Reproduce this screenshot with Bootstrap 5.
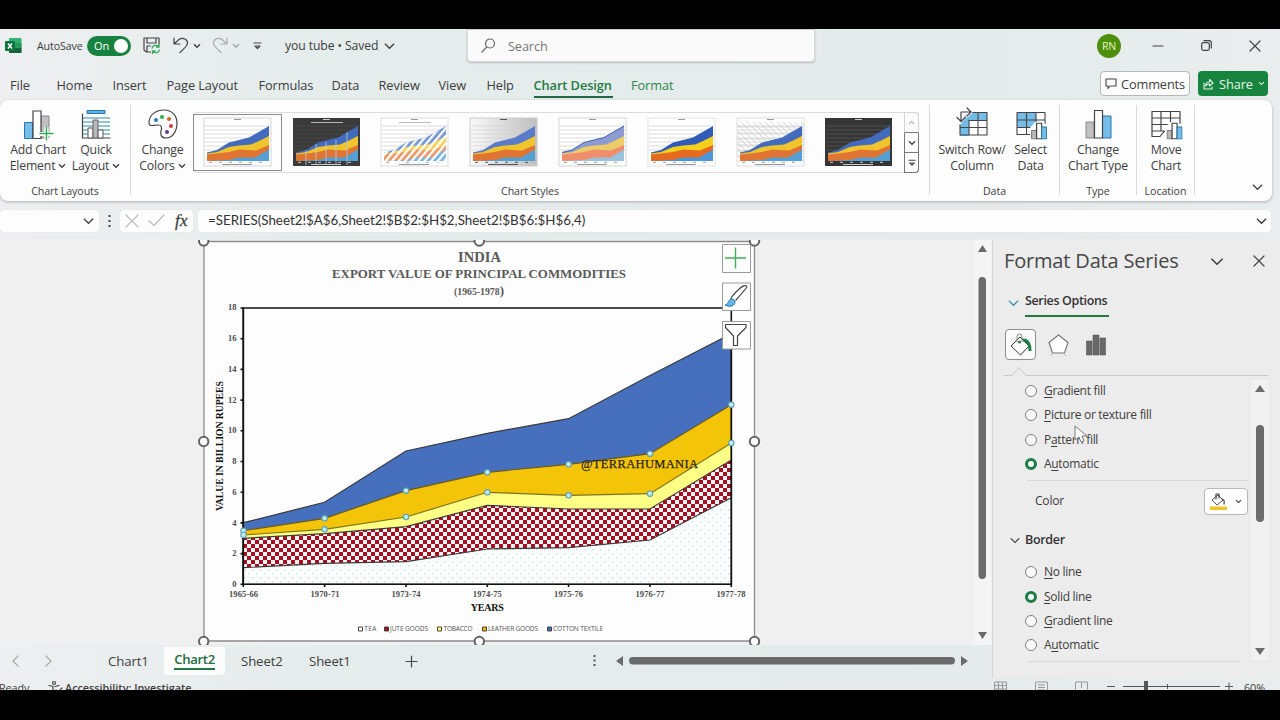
<!DOCTYPE html>
<html lang="en">
<head>
<meta charset="utf-8">
<meta name="viewport" content="width=device-width, initial-scale=1">
<title>you tube - Excel</title>
<link href="https://cdn.jsdelivr.net/npm/bootstrap@5.3.0/dist/css/bootstrap.min.css" rel="stylesheet">
<style>
  body { width:1280px; height:720px; overflow:hidden; background:#000; font-family:"Open Sans","Noto Sans",sans-serif; font-size:12.5px; line-height:16px; color:#3d3d3d; letter-spacing:-.1px; }
  svg { display:block; flex:none; overflow:visible; }
  .ln { fill:none; stroke:#444; stroke-width:1.2; stroke-linecap:round; stroke-linejoin:round; }
  .app { margin-top:29px; height:661px; overflow:hidden; background:linear-gradient(90deg,#edeff0 0,#e5ecec 25%,#e4ebea 75%,#e9eded 100%); display:grid; grid-template-rows:39px 32px 101px 39px 405px 57px; }
  .titlebar { padding-left:5px; height:33px; }
  .autosave { font-size:10.6px; margin-left:15px; width:50px; }
  .docname { font-size:12.2px; margin-left:23px; width:99px; white-space:nowrap; }
  .toggle { width:44px; height:20px; border-radius:10px; background:#17823f; color:#fff; font-size:11px; padding:0 3px 0 7px; }
  .knob { width:14px; height:14px; border-radius:50%; background:#fff; }
  .searchbox { width:348px; height:33px; background:#fafafa; border:1px solid #d6dada; border-top-color:#ccc; border-radius:0 0 4px 4px; box-shadow:0 1px 2px #0003; color:#777; font-size:12.7px; padding-left:13px; gap:12px; margin-left:72px; align-self:flex-start; }
  .avatar { width:24px; height:24px; border-radius:50%; background:#4e900b; color:#e3f3c0; font-size:10.5px; margin-left:282px; }
  .tabs { font-size:12.8px; padding-left:10px; }
  .tabs > span { height:23px; line-height:20px; white-space:nowrap; flex:none; margin-top:7px; }
  .tabs > span:nth-child(1){width:46.5px} .tabs > span:nth-child(2){width:56px} .tabs > span:nth-child(3){width:54px} .tabs > span:nth-child(4){width:92px} .tabs > span:nth-child(5){width:73px} .tabs > span:nth-child(6){width:47px} .tabs > span:nth-child(7){width:60px} .tabs > span:nth-child(8){width:48px} .tabs > span:nth-child(9){width:47px}
  .tabs .on { color:#1f7a43; font-weight:600; width:79px; border-bottom:2px solid #20683f; letter-spacing:-.08px; }
  .tabs .fmt { color:#2d8650; margin-left:18.5px; width:469px; }
  .pill { height:25px; border-radius:4px; font-size:12.8px; margin-top:3px; white-space:nowrap; }
  .comments { width:90px; border:1px solid #b5b8b8; background:#fdfdfd; gap:4px; padding-left:4px; letter-spacing:-.15px; }
  .share { width:70px; background:#17853f; color:#e4f5e8; margin-left:8px; gap:5px; padding-left:4px; }
  .ribbon { background:#fdfdfd; border-radius:8px; width:1272px; box-shadow:0 1px 3px #0004; }
  .rgroup { border-right:1px solid #dadada; height:90px; margin-top:5px; }
  .rgroup > .cap { font-size:10.6px; line-height:14px; height:11px; text-align:center; letter-spacing:-.05px; }
  .rbtn { width:58px; text-align:center; line-height:16px; font-size:12.3px; letter-spacing:-.2px; white-space:nowrap; }
  .rbtn svg { height:32px; margin:3px auto 2px; }
  .rbtn span svg { display:inline-block; height:auto; margin:0 0 2px 3px; }
  .g-layout { width:131px; } .g-style { width:799px; } .g-data { width:130px; } .g-type { width:77px; } .g-loc { width:58px; }
  .gallery { width:726px; height:61px; border:1px solid #dcdcdc; border-radius:4px; margin:7px 0 0 2px; }
  .thumb { width:88.8px; height:57px; }
  .thumb.sel { border:1px solid #8d8d8d; margin-top:1px; background:#fdfdfd; margin-left:-1px; padding-bottom:1px; }
  .gscroll { width:15px; margin-left:auto; margin-right:-1px; margin-top:-1px; height:61px; }
  .gscroll > div { height:20px; border:1px solid #777; border-top-width:0; }
  .gscroll > div:first-child { border-color:#d4d4d4 #d4d4d4 #777; height:21px; border-top-width:1px; border-top-right-radius:4px; }
  .gscroll > div:last-child { border-bottom-right-radius:4px; }
  .fbar { padding-top:8.5px; }
  .fbox { background:#fdfdfd; height:22px; border-radius:4px; box-shadow:0 0 1px #0002; }
  .fx { font:italic 17px "Liberation Serif",serif; margin-left:11px; letter-spacing:.3px; -webkit-text-stroke:.3px; }
  .ftext { font-family:Lato,"Open Sans",sans-serif; font-size:13.35px; line-height:21px; color:#333; padding-left:10px; width:1073px; letter-spacing:0; }
  .work { background:#f0f0f0; }
  .sheetarea { width:992px; overflow:hidden; }
  .chart text { font-family:"Liberation Serif",serif; letter-spacing:0; }
  .chart .legend text { font-family:"Open Sans",sans-serif; font-size:6.5px; }
  .pane { width:288px; background:#ececec; border-left:1px solid #d3d6d6; height:438px; position:relative; z-index:2; }
  .pane h2 { font-size:20px; line-height:26px; font-weight:400; color:#474747; margin:0; letter-spacing:-.17px; width:201px; white-space:nowrap; }
  .so { font-weight:600; border-bottom:2.5px solid #217a40; height:24px; width:84px; letter-spacing:-.35px; white-space:nowrap; color:#333; }
  .seltab { width:31px; height:31px; border:1px solid #8f8f8f; border-radius:4px; background:#fafafa; }
  .opt { height:24.3px; gap:7px; letter-spacing:-.3px; font-size:12px; }
  .opt i { width:12px; height:12px; border:1.4px solid #808080; border-radius:50%; background:#fafafa; }
  .opt i.on { border:3.6px solid #1b7c45; }
  .opt u { text-underline-offset:2px; }
  .colorrow { border-top:1px solid #d9d9d9; margin:4px 0 0 34px; width:221px; height:41px; font-size:12.1px; letter-spacing:-.25px; }
  .colorbtn { width:44px; height:27px; border:1px solid #b9b9b9; border-radius:4px; background:#fdfdfd; flex:none; }
  .sheets { font-size:13.2px; height:32px; padding-left:12px; }
  .activetab { color:#1f6b41; font-weight:600; width:61px; height:28px; background:#fcfcfc; border-radius:0 0 4px 4px; letter-spacing:-.35px; }
  .activetab b { border-bottom:2px solid #1f7a43; font-weight:600; line-height:18px; margin-top:-3px; }
  .status { font-size:10.8px; line-height:14px; padding-top:3.5px; white-space:nowrap; }
  .cursor { position:absolute; left:81px; top:185px; }
</style>
</head>
<body>
<svg width="0" height="0" class="position-absolute">
  <defs>
    <pattern id="check" width="8" height="8" patternUnits="userSpaceOnUse" x="243" y="584"><path fill="#fdf3f3" d="M0 0h8v8H0z"/><path fill="#a50f22" d="M0 0h4v4H0zM4 4h4v4H4z"/></pattern>
    <pattern id="dots" width="8" height="8" patternUnits="userSpaceOnUse" x="243" y="584"><path fill="#fcfdfd" d="M0 0h8v8H0z"/><path fill="#b5dde3" d="M1 1h1.3v1.3H1zM5 5h1.3v1.3H5z"/></pattern>
    <pattern id="hatch" width="5" height="5" patternUnits="userSpaceOnUse" patternTransform="rotate(40)"><path fill="#fdfdfd" d="M0 0h2.300v5H0z"/></pattern>
    <pattern id="grid" width="6" height="6" patternUnits="userSpaceOnUse"><path d="M0 0l6 6M0 3h6" stroke="#c9c9c9" stroke-width=".7"/></pattern>
    <linearGradient id="gray"><stop stop-color="#fafafa"/><stop offset="1" stop-color="#bdbdbd"/></linearGradient>
    <symbol id="area" viewBox="0 0 67 48">
      <path d="M1 8h65M1 12h65M1 16h65M1 20h65M1 24h65M1 28h65M1 32h65" stroke="var(--g,#ccc)" stroke-width=".7"/>
      <path fill="var(--a,#426bbd)" d="M3 34.500L13 32 25 24.500 35 22 45 19.500 65 8V43H3z"/>
      <path fill="var(--b,#efc42c)" d="M3 35.500L13 34 25 29 35 27.500 47 26.500 55 23 65 18V43H3z"/>
      <path fill="var(--c,#e07432)" d="M3 36.500L13 35.500 25 34 35 31.500 52 32.500 65 27V43H3z"/>
      <path fill="var(--d,#549fd3)" d="M3 43L25 42 35 39.500 51 39.500 65 31.500V43H3z"/>
      <path d="M30 1.500h7M18 46.500h30M5 44.300h3m7 0h3m7 0h3m7 0h3m7 0h3m7 0h3" stroke="var(--t,#999)" stroke-width="1"/>
    </symbol>
    <symbol id="chev" viewBox="0 0 8 6"><path d="M1 1.300l3 3 3-3" fill="none" stroke="currentColor" stroke-width="1.300"/></symbol>
    <symbol id="bigchev" viewBox="0 0 12 8"><path d="M1 1.500l5 5 5-5" fill="none" stroke="currentColor" stroke-width="1.300"/></symbol>
    <symbol id="bars" viewBox="0 0 16 17"><path d="M.6 8h5v8.400h-5z" fill="#b8b8b8" stroke="#777"/><path d="M5.600.6h5v15.800h-5z" fill="#fff" stroke="#444" stroke-width="1.200"/><path d="M10.600 4.500h5v12h-5z" fill="#75bce8" stroke="#2778a9"/></symbol>
  </defs>
</svg>

<div class="app">
  <header class="titlebar d-flex align-items-center">
    <svg width="17" height="17" viewBox="0 0 17 17"><rect x="4" y="1" width="12.500" height="15" rx="1" fill="#33b073"/><path fill="#1f8a50" d="M4 6h6v5H4z"/><path fill="#17603c" d="M4 11h12.500v4a1 1 0 0 1-1 1H4z"/><path fill="#2a9a5d" d="M10 6h6.500v5H10z"/><rect y="4" width="10" height="10" rx="1" fill="#0f7540"/><path d="M3 6.500l4 5M7 6.500l-4 5" stroke="#fff" stroke-width="1.400"/></svg>
    <span class="autosave">AutoSave</span>
    <div class="toggle d-flex align-items-center justify-content-between">On<i class="knob"></i></div>
    <svg style="margin-left:12px" width="17" height="17" viewBox="0 0 17 17"><path class="ln" d="M8 15H3.500L1 13V1h15v6M4 1v5h9V1M4 15V9h4"/><path d="M8 8h9v9H8z" fill="#e8eded"/><path d="M9 11.500a3.800 3.800 0 0 1 6.500-2M16 7v3h-3M16.500 12.500a3.800 3.800 0 0 1-6.500 2M9.500 17v-3h3" fill="none" stroke="#35a857" stroke-width="1.300"/></svg>
    <svg style="margin-left:13px" width="16" height="17" viewBox="0 0 16 17"><path class="ln" d="M1 1v6h6M1.500 6.500L6 2.500C10-.5 15 3 14.500 6.500 14 9 12 11 7 15.500"/></svg>
    <svg style="margin-left:4px" width="8" height="6"><use href="#chev"/></svg>
    <svg style="margin-left:11px" width="16" height="17" viewBox="0 0 16 17"><path class="ln" style="stroke:#aaa" d="M15 1v6H9M14.500 6.500L10 2.500C6-.5 1 3 1.500 6.500 2 9 4 11 9 15.500"/></svg>
    <svg class="text-black-50" style="margin-left:4px;opacity:.6" width="8" height="6"><use href="#chev"/></svg>
    <svg style="margin-left:13px" width="9" height="8" viewBox="0 0 9 8"><path class="ln" d="M1 1h7M2 4l2.500 2.500L7 4z"/></svg>
    <span class="docname">you tube &bull; Saved</span>
    <svg width="11" height="8"><use href="#bigchev"/></svg>
    <div class="searchbox d-flex align-items-center">
      <svg width="15" height="15" viewBox="0 0 15 15"><circle class="ln" style="stroke:#666" cx="9" cy="5.500" r="4.500"/><path class="ln" style="stroke:#666" d="M5.800 8.800L1 14"/></svg>Search
    </div>
    <div class="avatar d-flex align-items-center justify-content-center">RN</div>
    <svg style="margin-left:32px" width="10" height="10"><path class="ln" d="M0 5h10"/></svg>
    <svg style="margin-left:38px" width="11" height="11" viewBox="0 0 11 11"><rect class="ln" x=".7" y="2.700" width="7.600" height="7.600" rx="1.500"/><path class="ln" d="M3 .7h5a2.300 2.300 0 0 1 2.300 2.300v5"/></svg>
    <svg style="margin-left:38px" width="10" height="10"><path class="ln" d="M0 0l10 10M10 0L0 10"/></svg>
  </header>

  <nav class="tabs d-flex">
    <span>File</span><span>Home</span><span>Insert</span><span>Page Layout</span><span>Formulas</span><span>Data</span><span>Review</span><span>View</span><span>Help</span><span class="on">Chart Design</span><span class="fmt">Format</span>
    <div class="pill comments d-flex align-items-center"><svg width="12" height="12" viewBox="0 0 12 12"><path class="ln" style="stroke-width:1.100" d="M1 1h10v7H5L3 10.500V8H1z"/></svg>Comments</div>
    <div class="pill share d-flex align-items-center"><svg width="12" height="12" viewBox="0 0 12 12"><path class="ln" style="stroke:#dff5e4;stroke-width:1.100" d="M2 5v6h8V9M3.500 8c0-3 2-4 4-4V1.500L11 5 7.500 8V6C6 6 4.500 6.500 3.500 8z"/></svg>Share<svg width="7" height="5"><use href="#chev"/></svg></div>
  </nav>

  <section class="ribbon d-flex">
    <div class="rgroup g-layout d-flex flex-column justify-content-between">
      <div class="d-flex" style="padding-left:9px">
        <div class="rbtn"><svg width="32" height="32" viewBox="0 0 32 32"><path d="M2.500 14.500h8v16h-8z" fill="#77bde9" stroke="#2778a9"/><path d="M19 8h8v22h-8z" fill="#c0c0c0" stroke="#888"/><path d="M11 3h8v27.500h-8z" fill="#fff" stroke="#444" stroke-width="1.200"/><path d="M24.500 19v14M17.500 26h14" stroke="#fff" stroke-width="4"/><path d="M24.500 18.500v14M17.500 25.500h14" stroke="#35a857" stroke-width="1.400"/></svg>Add Chart<br><span>Element<svg width="8" height="6"><use href="#chev"/></svg></span></div>
        <div class="rbtn"><svg width="30" height="32" viewBox="0 0 30 32"><path d="M6 2.500h18v3H6z" fill="#62b0e3" stroke="#2778a9"/><path d="M2 10h27M2 14h27M2 18h27M2 22h27M2 26h27" stroke="#2f8f9d"/><path class="ln" d="M1.500 6v24H29"/><path d="M7 20h5v10H7z" fill="#fff" stroke="#555"/><path d="M12 12h5v18h-5z" fill="#b9b9b9" stroke="#666"/><path d="M17 22h5v8h-5z" fill="#fff" stroke="#555"/></svg>Quick<br><span>Layout<svg width="8" height="6"><use href="#chev"/></svg></span></div>
      </div>
      <div class="cap">Chart Layouts</div>
    </div>
    <div class="rgroup g-style d-flex flex-column justify-content-between">
      <div class="d-flex" style="padding-left:2px">
        <div class="rbtn" style="padding-left:1px"><svg width="30" height="32" viewBox="0 0 30 32"><path class="ln" d="M1 15C1 6 9 2 16 2c8 0 13 6 13 13 0 9-5 15-11 15-5 0-6-4-5-7 1-3 1-6-3-6-5 0-9 2-9-2z" style="fill:#fff"/><circle cx="8" cy="12" r="2" fill="#287db8"/><circle cx="14" cy="9" r="2" fill="#35a857"/><circle cx="21" cy="11" r="2" fill="#c76b1e"/><circle cx="23" cy="18" r="2" fill="#c93c43"/><circle cx="19" cy="24" r="2" fill="#6c3698"/></svg>Change<br><span>Colors<svg width="8" height="6"><use href="#chev"/></svg></span></div>
        <div class="gallery d-flex">
          <div class="thumb sel d-flex align-items-center justify-content-center"><svg width="67" height="48"><rect width="67" height="48" fill="#fff" stroke="#d5d5d5"/><use href="#area"/></svg></div>
          <div class="thumb d-flex align-items-center justify-content-center"><svg width="67" height="48" style="--g:#4d4d4d;--t:#ccc"><rect width="67" height="48" fill="#3a3a3a"/><use href="#area"/><path d="M13 32v15M23 26v21M33 24v23M43 22v25M54 14v33" stroke="#b8cbe0" stroke-width=".8"/><path d="M18 4.500h32" stroke="#bbb"/></svg></div>
          <div class="thumb d-flex align-items-center justify-content-center"><svg width="67" height="48" style="--a:#6f94d6;--b:#f3d25a;--c:#ea9463;--d:#6fb2dd"><rect width="67" height="48" fill="#fff" stroke="#ddd"/><use href="#area"/><path d="M3 34.500L13 32 25 24.500 35 22 45 19.500 65 8V46H3z" fill="url(#hatch)"/><path d="M18 4.500h32" stroke="#bbb"/></svg></div>
          <div class="thumb d-flex align-items-center justify-content-center"><svg width="67" height="48" style="--g:#d0d0d0;--a:#5a7cc8;--t:#555"><rect width="67" height="48" fill="url(#gray)" stroke="#ccc"/><use href="#area"/></svg></div>
          <div class="thumb d-flex align-items-center justify-content-center"><svg width="67" height="48" style="--a:#8c9bd2;--b:#edcb67;--c:#ef8e6c;--d:#9bc2dd"><rect width="67" height="48" fill="#fff" stroke="#d5d5d5"/><use href="#area"/><path d="M3 34.500L13 32 25 24.500 35 22 45 19.500 65 8" fill="none" stroke="#3f5fae"/></svg></div>
          <div class="thumb d-flex align-items-center justify-content-center"><svg width="67" height="48" style="--a:#2e5cb8;--b:#f4cf1b;--c:#e56a20;--d:#4b96d8"><rect width="67" height="48" fill="#fff" stroke="#e2e2e2"/><use href="#area"/></svg></div>
          <div class="thumb d-flex align-items-center justify-content-center"><svg width="67" height="48"><rect width="67" height="48" fill="#fff" stroke="#ddd"/><rect y="4" width="67" height="40" fill="url(#grid)"/><use href="#area"/></svg></div>
          <div class="thumb d-flex align-items-center justify-content-center"><svg width="67" height="48" style="--g:#5c5c5c;--t:#ccc"><rect width="67" height="48" fill="#353535"/><use href="#area"/></svg></div>
          <div class="gscroll">
            <div class="d-flex align-items-center justify-content-center"><svg width="7" height="5" style="transform:scaleY(-1);color:#aaa"><use href="#chev"/></svg></div>
            <div class="d-flex align-items-center justify-content-center"><svg width="8" height="6"><use href="#chev"/></svg></div>
            <div class="d-flex align-items-center justify-content-center"><svg width="8" height="8" viewBox="0 0 9 8"><path class="ln" d="M1 1h7M2 4l2.500 2.500L7 4z"/></svg></div>
          </div>
        </div>
      </div>
      <div class="cap">Chart Styles</div>
    </div>
    <div class="rgroup g-data d-flex flex-column justify-content-between">
      <div class="d-flex" style="padding-left:8px">
        <div class="rbtn" style="width:68px"><svg width="32" height="32" viewBox="0 0 32 32"><path d="M4 10L10 4.500h21V28H4z" fill="#fff"/><path d="M12 4.500h19v8H4l3-3zM4 12h9v16H4z" fill="#74bbe8"/><path class="ln" style="stroke-width:1.100" d="M13 4.500h18V27H4V14M4 19.500h27M13 12.500h18M13 12v15M22 4.500V27"/><path class="ln" d="M4 15V6.500Q4 4 7 4h8M11 0l4 4-4 4M0 10l4 4 4-4" style="stroke:#fff;stroke-width:3"/><path class="ln" d="M5 13V4h10M11 0l4 4-4 4M1 9.500l4 4 4-4"/></svg>Switch Row/<br>Column</div>
        <div class="rbtn" style="width:49px"><svg width="32" height="32" viewBox="0 0 32 32"><path d="M2 4.500h28v22H2z" fill="#fff"/><path d="M2 4.500h19v15H2z" fill="#74bbe8"/><path class="ln" style="stroke-width:1.100" d="M2 4.500h28v22H2zM2 12h28M2 19.500h28M11.500 4.500v22M21 4.500v22"/><path fill="#fdfdfd" d="M15 20l5-6h6l7 3v16H15z"/><use href="#bars" x="16" y="14.500" width="16" height="17"/></svg>Select<br>Data</div>
      </div>
      <div class="cap">Data</div>
    </div>
    <div class="rgroup g-type d-flex flex-column justify-content-between">
      <div class="rbtn" style="width:76px"><svg width="27" height="32" viewBox="0 0 27 32"><path d="M1 14h8v16H1z" fill="#c0c0c0" stroke="#888"/><path d="M17.500 8H26v22h-8.500z" fill="#77bde9" stroke="#2778a9"/><path d="M9.500 2.500h8V30h-8z" fill="#fff" stroke="#444" stroke-width="1.200"/></svg>Change<br>Chart Type</div>
      <div class="cap">Type</div>
    </div>
    <div class="rgroup g-loc d-flex flex-column justify-content-between">
      <div class="rbtn"><svg width="32" height="32" viewBox="0 0 32 32"><path class="ln" style="stroke-width:1.200;fill:#fff" d="M2 3.500h28v20H14l-4 5H2zM2 10h28M2 16.500h28M2 23h12M11 3.500V23M20.500 3.500v16"/><path fill="#fdfdfd" d="M15 20l5-6h6l7 3v16H15z"/><use href="#bars" x="16.500" y="14.500" width="16" height="17"/></svg>Move<br>Chart</div>
      <div class="cap">Location</div>
    </div>
    <svg class="align-self-end" style="margin:0 0 10px 57px" width="11" height="8"><use href="#bigchev"/></svg>
  </section>

  <section class="fbar d-flex align-items-start">
    <div class="fbox d-flex align-items-center justify-content-end" style="width:99px;padding-right:5px"><svg width="11" height="8"><use href="#bigchev"/></svg></div>
    <svg style="margin:5px 9px 0" width="3" height="13"><path fill="#444" d="M.5 0h2v2h-2zM.5 5h2v2h-2zM.5 10h2v2h-2z"/></svg>
    <div class="fbox d-flex align-items-center" style="width:73px;padding-left:6px">
      <svg width="12" height="12"><path class="ln" style="stroke:#bbb" d="M0 0l12 12M12 0L0 12"/></svg>
      <svg style="margin-left:11px" width="15" height="11"><path class="ln" style="stroke:#bbb" d="M0 6l5 4.500L15 0"/></svg>
      <span class="fx">fx</span>
    </div>
    <div class="fbox ftext d-flex justify-content-between" style="margin-left:5px"><span>=SERIES(Sheet2!$A$6,Sheet2!$B$2:$H$2,Sheet2!$B$6:$H$6,4)</span><svg class="align-self-center" style="margin-right:4px" width="11" height="8"><use href="#bigchev"/></svg></div>
  </section>

  <main class="work d-flex">
    <div class="sheetarea d-flex">
      <svg class="chart" width="992" height="405" viewBox="0 240 992 405" style="overflow:hidden">
        <path fill="#fdfdfd" stroke="#8b8b8b" stroke-width="1.300" d="M204 241.500h550.500v399.500H204z"/>
        <g fill="#595959" font-weight="bold" text-anchor="middle">
          <text x="479.500" y="261.500" font-size="14.500" textLength="43">INDIA</text>
          <text x="479" y="278" font-size="12.500" textLength="294" lengthAdjust="spacingAndGlyphs">EXPORT VALUE OF PRINCIPAL COMMODITIES</text>
          <text x="479" y="295" font-size="9.800" textLength="50">(1965-1978<tspan font-size="13">)</tspan></text>
        </g>
        <path fill="#fdfdfd" stroke="#111" stroke-width="1.600" d="M243.300 308h488v276.300h-488z"/>
        <g stroke="#3a3a3a" stroke-width="1.200">
          <path fill="#4670bd" d="M243.300 522.700L324.600 502.300 406 451 487.300 433.300 568.600 418.700 650 375.500 731.300 333.700V584.300h-488z"/>
          <path fill="#f4c409" stroke="#6b5a20" d="M243.300 530.700L324.600 518.300 406 490.700 487.300 472.300 568.600 464.300 650 453.700 731.300 404.700V584.300h-488z"/>
          <path fill="#feff85" stroke="#7a7420" d="M243.300 535L324.600 529.300 406 517 487.300 492.300 568.600 495.300 650 493.700 731.300 443V584.300h-488z"/>
          <path fill="url(#check)" d="M243.300 538.300L324.600 533.700 406 526.700 487.300 505.300 568.600 509 650 509 731.300 460V584.300h-488z"/>
          <path fill="url(#dots)" d="M243.300 567.700L324.600 563.300 406 561.700 487.300 549 568.600 547.700 650 540 731.300 497.700V584.300h-488z"/>
        </g>
        <path fill="none" stroke="#111" stroke-width="1.600" d="M243.300 308v276.300h488V334M240.500 308h3M240.500 338.700h3M240.500 369.400h3M240.500 400.100h3M240.500 430.800h3M240.500 461.500h3M240.500 492.200h3M240.500 522.900h3M240.500 553.600h3M240.500 584.300h3M243.300 584v3M324.600 584v3M406 584v3M487.300 584v3M568.600 584v3M650 584v3M731.300 584v3"/>
        <g font-size="8.500" font-weight="bold" fill="#4c4c4c" text-anchor="end">
          <text x="236.500" y="310.300">18</text><text x="236.500" y="341">16</text><text x="236.500" y="372">14</text><text x="236.500" y="402.700">12</text><text x="236.500" y="433.300">10</text><text x="236.500" y="464">8</text><text x="236.500" y="494.700">6</text><text x="236.500" y="525.500">4</text><text x="236.500" y="556.300">2</text><text x="236.500" y="587">0</text>
        </g>
        <g font-size="8.500" font-weight="bold" fill="#4c4c4c" text-anchor="middle">
          <text x="243.500" y="596.700" textLength="29">1965-66</text><text x="325" y="596.700" textLength="29">1970-71</text><text x="406" y="596.700" textLength="29">1973-74</text><text x="487.300" y="596.700" textLength="29">1974-75</text><text x="568.600" y="596.700" textLength="29">1975-76</text><text x="650" y="596.700" textLength="29">1976-77</text><text x="731" y="596.700" textLength="29">1977-78</text>
        </g>
        <text x="487.300" y="610.500" font-size="10" font-weight="bold" fill="#111" text-anchor="middle" textLength="33">YEARS</text>
        <text transform="translate(223 446) rotate(-90)" font-size="9.800" font-weight="bold" fill="#111" text-anchor="middle" textLength="130">VALUE IN BILLION RUPEES</text>
        <text x="581" y="468" font-size="12.500" fill="#2a2415" stroke="#2a2415" stroke-width=".25" textLength="117">@TERRAHUMANIA</text>
        <g fill="#c6e9f0" stroke="#5aa3b5" stroke-width="1.100">
          <circle cx="243.500" cy="530.700" r="2.700"/><circle cx="324.600" cy="518.300" r="2.700"/><circle cx="406" cy="490.700" r="2.700"/><circle cx="487.300" cy="472.300" r="2.700"/><circle cx="568.600" cy="464.300" r="2.700"/><circle cx="650" cy="453.700" r="2.700"/><circle cx="731.300" cy="404.700" r="2.700"/>
          <circle cx="243.500" cy="535" r="2.700"/><circle cx="324.600" cy="529.300" r="2.700"/><circle cx="406" cy="517" r="2.700"/><circle cx="487.300" cy="492.300" r="2.700"/><circle cx="568.600" cy="495.300" r="2.700"/><circle cx="650" cy="493.700" r="2.700"/><circle cx="731.300" cy="443" r="2.700"/>
        </g>
        <g class="legend" fill="#555">
          <g stroke="#333" stroke-width=".9"><path fill="#fff" d="M358.500 627h4v4h-4z"/><path fill="#a50f22" d="M384.500 627h4v4h-4z"/><path fill="#feff66" d="M437.500 627h4v4h-4z"/><path fill="#f0b800" d="M482.500 627h4v4h-4z"/><path fill="#4670bd" d="M547.500 627h4v4h-4z"/></g>
          <text x="364.300" y="631.300" textLength="12">TEA</text><text x="390" y="631.300" textLength="38">JUTE GOODS</text><text x="443.500" y="631.300" textLength="29">TOBACCO</text><text x="488" y="631.300" textLength="50">LEATHER GOODS</text><text x="553" y="631.300" textLength="50">COTTON TEXTILE</text>
        </g>
        <g fill="#fdfdfd" stroke="#636363" stroke-width="2">
          <circle cx="203.700" cy="241" r="4.700"/><circle cx="479.300" cy="241" r="4.700"/><circle cx="754.500" cy="241" r="4.700"/><circle cx="203.700" cy="441.500" r="4.700"/><circle cx="754.500" cy="441.500" r="4.700"/><circle cx="203.700" cy="641.500" r="4.700"/><circle cx="479.300" cy="641.500" r="4.700"/><circle cx="754.500" cy="641.500" r="4.700"/>
        </g>
        <g fill="#fdfdfd" stroke="#9a9a9a"><path d="M722.500 244.500h28v28h-28zM722.500 283h28v27.500h-28zM722.500 321.500h28V349h-28z"/></g>
        <path d="M735.500 247.500v21M725 258h21" stroke="#41b058" stroke-width="1.400"/>
        <path class="ln" d="M731.500 299.500q-2-1 5-8 9-9 10.500-4.500Q744 291 736 300" style="fill:#fff"/><path d="M725 305c4-1 3-6 7-6 4 1 4 4 1 6.500q-4 2-8-.5z" fill="#65b5e6" stroke="#2778a9"/>
        <path class="ln" d="M725.500 324.500h20.500v3l-8.500 8.500v9.500h-4V336l-8-8.500z"/>
        <path fill="#f4f4f4" d="M974 240h17v405h-17z"/><path fill="#6b6b6b" d="M982.500 245l4.500 7h-9zM982.500 639l4.500-7h-9z"/><rect x="978.500" y="277" width="7.500" height="302" rx="3.700" fill="#6b6b6b"/>
      </svg>
    </div>
    <aside class="pane">
      <div class="d-flex align-items-center" style="padding:8px 0 0 11px"><h2>Format Data Series</h2><svg style="margin-left:5px" width="14" height="9"><use href="#bigchev"/></svg><svg style="margin-left:30px" width="10" height="10"><path class="ln" d="M0 0l10 10M10 0L0 10"/></svg></div>
      <div class="d-flex" style="padding:19px 0 0 15px"><svg style="margin:6px 6px 0 0;color:#3c93ad" width="11" height="8"><use href="#bigchev"/></svg><div class="so">Series Options</div></div>
      <div class="d-flex align-items-center" style="padding:12px 0 0 12px">
        <div class="seltab d-flex align-items-center justify-content-center"><svg width="22" height="23" viewBox="0 0 22 23"><path d="M1 13L10 4l9 9-8.500 9z" fill="#fff" stroke="#333"/><path fill="none" stroke="#888" d="M7 9V4q0-3 2.500-3T12 4v5"/><circle cx="9.500" cy="9" r="1.500" fill="#217a40"/><path d="M13 7q7 0 7 11" fill="none" stroke="#1b8048" stroke-width="3"/></svg></div>
        <svg style="margin-left:12px" width="21" height="22" viewBox="0 0 21 22"><path d="M10.500 1L20 8.500 16.500 19h-12L1 8.500z" fill="#fdfdfd" stroke="#777" stroke-width="1.200"/><path d="M5 19l-2 3M16 19l2 3" stroke="#bbb"/></svg>
        <svg style="margin-left:17px" width="20" height="22"><path fill="#696969" stroke="#555" stroke-width=".6" d="M.5 7H6v14H.5zM7 1h6v20H7zM14 4h5.500v17H14z"/></svg>
      </div>
      <svg width="264" height="12" style="margin:6px 0 0 11px"><path d="M0 9.500h8l7-8 7 8h242" fill="none" stroke="#c9c9c9"/></svg>
      <div style="width:258px;padding:1px 0 0 32px">
        <div class="opt d-flex align-items-center"><i></i><span><u>G</u>radient fill</span></div>
        <div class="opt d-flex align-items-center"><i></i><span><u>P</u>icture or texture fill</span></div>
        <div class="opt d-flex align-items-center"><i></i><span>P<u>a</u>ttern fill</span></div>
        <div class="opt d-flex align-items-center"><i class="on"></i><span>A<u>u</u>tomatic</span></div>
      </div>
      <svg class="position-absolute" style="left:258px;top:140px" width="18" height="280"><path fill="#f1f1f1" d="M0 0h18v280H0z"/><path fill="#6b6b6b" d="M9 5l5 7H4zM9 275l5-7H4z"/><rect x="5" y="45" width="8" height="97" rx="4" fill="#6b6b6b"/></svg>
      <div class="colorrow d-flex align-items-center justify-content-between"><span style="padding-left:8px">Color</span><div class="colorbtn d-flex align-items-center justify-content-center gap-2"><svg width="17" height="17" viewBox="0 0 17 17"><path d="M2 7l6-5 5 5-6 5z" fill="#fff" stroke="#555"/><path class="ln" d="M6 6V1h3v4M12 6q3 1 2 5"/><path fill="#efc42c" d="M0 13.500h17v3.500H0z"/></svg><svg width="7" height="5"><use href="#chev"/></svg></div></div>
      <div class="d-flex align-items-center fw-semibold" style="padding-left:17px;height:38px;color:#333;letter-spacing:-.3px"><svg style="margin-right:5px" width="10" height="7"><use href="#bigchev"/></svg>Border</div>
      <div style="padding:1px 0 0 32px">
        <div class="opt d-flex align-items-center"><i></i><span><u>N</u>o line</span></div>
        <div class="opt d-flex align-items-center"><i class="on"></i><span><u>S</u>olid line</span></div>
        <div class="opt d-flex align-items-center"><i></i><span><u>G</u>radient line</span></div>
        <div class="opt d-flex align-items-center"><i></i><span>A<u>u</u>tomatic</span></div>
      </div>
      <div style="border-top:1px solid #d9d9d9;margin:4px 0 0 34px;width:213px"></div>
      <svg class="cursor" width="14" height="20" viewBox="0 0 14 20"><path d="M1 1v14l4-3 2 5 3-1-2-5h5z" fill="#fff" stroke="#777"/></svg>
    </aside>
  </main>

  <footer>
    <div class="sheets d-flex align-items-center">
      <svg width="7" height="10"><path class="ln" style="stroke:#aaa" d="M6 0L1 5l5 5"/></svg>
      <svg style="margin-left:26px" width="7" height="10"><path class="ln" style="stroke:#aaa" d="M1 0l5 5-5 5"/></svg>
      <span style="margin-left:56px;width:56px">Chart1</span>
      <span class="activetab d-flex align-items-center justify-content-center"><b>Chart2</b></span>
      <span style="margin-left:16px;width:68px">Sheet2</span><span style="width:97px">Sheet1</span>
      <svg width="11" height="11"><path class="ln" d="M5.500 0v11M0 5.500h11"/></svg>
      <svg style="margin-left:176px" width="3" height="12"><path fill="#555" d="M.5 0h2v2h-2zM.5 4.500h2v2h-2zM.5 9h2v2h-2z"/></svg>
      <svg style="margin-left:20px" width="352" height="12"><path fill="#6b6b6b" d="M0 6l7-5v10zM352 6l-7-5v10z"/><rect x="13" y="2" width="326" height="7.500" rx="3.700" fill="#6b6b6b"/></svg>
    </div>
    <div class="status d-flex">
      <span style="margin-left:-1px;width:49px">Ready</span>
      <svg width="14" height="13" viewBox="0 0 14 13"><circle class="ln" cx="6" cy="2" r="1.500"/><path class="ln" d="M1 4.500l4 1v3L3 12M11 4.500l-4 1M8 9l2 2 4-4"/></svg>
      <span style="margin-left:3px;width:929px;font-weight:600;letter-spacing:0">Accessibility: Investigate</span>
      <svg width="95" height="12"><g fill="none" stroke="#999"><path d="M.5 1h12v10H.500zM.5 4.500h12M.5 8h12M4.500 1v10M8.500 1v10M41.500 1h12v10h-12zM44 4h7M44 6.500h7M44 9h7M81.500 1h12v10h-12zM87.500 1v6"/></g></svg>
      <svg style="margin-left:18px" width="124" height="12"><path stroke="#555" d="M0 5.500h8M16 5.500h97M118 5.500h8M122 1.500v8"/><path fill="#555" d="M37 0h4v11h-4zM60 3h1v5h-1z"/></svg>
      <span style="margin-left:13px">60%</span>
    </div>
  </footer>
</div>
<script src="https://cdn.jsdelivr.net/npm/bootstrap@5.3.0/dist/js/bootstrap.bundle.min.js"></script>
</body>
</html>
